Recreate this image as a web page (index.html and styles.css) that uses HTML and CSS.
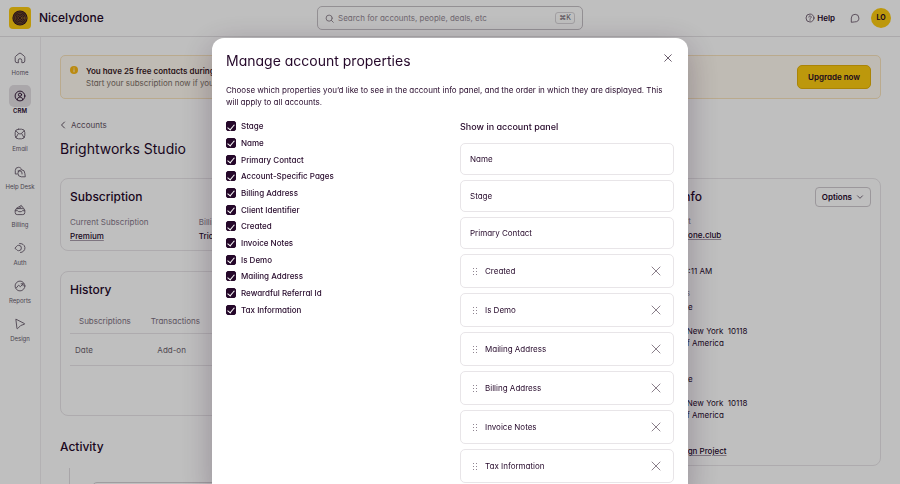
FILE: index.html
```html
<!DOCTYPE html>
<html lang="en">

<head>
    <meta charset="UTF-8" />
    <meta name="viewport" content="width=device-width, initial-scale=1.0" />
    <title>Brightworks Studio - Nicelydone</title>
    <link rel="stylesheet" href="styles.css">
</head>

<body>

    <header class="topbar">
        <a class="brand" href="#">
            <svg class="logo" viewBox="0 0 22 22" aria-hidden="true">
                <rect width="22" height="22" rx="4" fill="#fccb10" />
                <circle cx="11" cy="11" r="7.6" fill="#2d1226" />
                <g fill="none" stroke="#b98a25" stroke-width=".5">
                    <circle cx="11" cy="11" r="6.2" />
                    <circle cx="11" cy="11" r="4.7" />
                    <circle cx="11" cy="11" r="3.2" />
                    <circle cx="11" cy="11" r="1.6" />
                </g>
            </svg>
            <span>Nicelydone</span>
        </a>
        <label class="search">
            <svg viewBox="0 0 10 10" aria-hidden="true">
                <circle cx="4.6" cy="4.6" r="3.4" />
                <path d="M7.1 7.1L9.2 9.2" />
            </svg>
            <input type="search" placeholder="Search for accounts, people, deals, etc" aria-label="Search" />
            <kbd>⌘K</kbd>
        </label>
        <div class="topbar-actions">
            <a class="help" href="#">
                <svg viewBox="0 0 10 10" aria-hidden="true">
                    <circle cx="5" cy="5" r="4" />
                    <path d="M3.8 4.1a1.2 1.2 0 1 1 1.8 1c-.4.3-.6.4-.6.8M5 6.9v.4" />
                </svg>
                Help
            </a>
            <button class="icon-btn" type="button" aria-label="Messages">
                <svg viewBox="0 0 10 10" aria-hidden="true">
                    <path d="M1.3 8.9V5a3.8 3.8 0 1 1 3.8 3.9z" />
                </svg>
            </button>
            <button class="avatar" type="button">LO</button>
        </div>
    </header>

    <div class="layout">
        <nav class="sidebar">
            <a href="#">
                <span class="nav-icon"><svg viewBox="0 0 12 12"><path d="M4.2 10.7H3A1.8 1.8 0 0 1 1.2 9V5.4c0-.6.3-1.1.7-1.4L5 1.5a1.6 1.6 0 0 1 2 0L10.1 4c.4.3.7.8.7 1.4V9A1.8 1.8 0 0 1 9 10.7H7.8V8.5a1.8 1.8 0 0 0-3.6 0z" /></svg></span>
                Home
            </a>
            <a href="#" class="active">
                <span class="nav-icon"><svg viewBox="0 0 12 12"><circle cx="6" cy="6" r="4.9" /><circle cx="6" cy="4.7" r="1.6" /><path d="M3.2 9.8C3.5 8 4.5 7.1 6 7.1s2.5.9 2.8 2.7" /></svg></span>
                CRM
            </a>
            <a href="#">
                <span class="nav-icon"><svg viewBox="0 0 12 12"><rect x="1.2" y="1.2" width="9.6" height="9.6" rx="3.2" /><path d="M2 2.8l2.200 2.400c1 1 2.600 1 3.600 0L10 2.800M2 9.600l2.200-3.800M10 9.600L7.800 5.800" /></svg></span>
                Email
            </a>
            <a href="#">
                <span class="nav-icon"><svg viewBox="0 0 12 12"><path d="M3.2 8H1.3V4.5a3.2 3.2 0 0 1 3.2-3.2c1.4 0 2.6.8 3.1 2" /><path d="M10.9 10.8H7.3a3.5 3.5 0 1 1 3.6-3.5z" /><path d="M4 5h2a2 2 0 0 1 2 2v1" /></svg></span>
                Help Desk
            </a>
            <a href="#">
                <span class="nav-icon"><svg viewBox="0 0 12 12"><rect x="1.2" y="4.6" width="9.6" height="6" rx="2" /><path d="M1.3 6.7h2.2c.5 1.4 4.5 1.4 5 0h2.2M2.5 4.3l4.8-2.9 2.3 3M4.5 4.5l2.7-1.6" /></svg></span>
                Billing
            </a>
            <a href="#">
                <span class="nav-icon"><svg viewBox="0 0 12 12"><path d="M5.5 1.6a4.5 4.5 0 1 1 1 8.9" /><path d="M1.2 6l1.5-1.8c.5-.6 1.2-.9 2-.9a2.7 2.7 0 0 1 0 5.4c-.8 0-1.5-.3-2-.9z" /></svg></span>
                Auth
            </a>
            <a href="#">
                <span class="nav-icon"><svg viewBox="0 0 12 12"><circle cx="6" cy="6" r="4.9" /><path d="M2.4 7.8l2.2-2.6 1.800 1.500 2.700-2.900M7.100 3.800h2v2" /></svg></span>
                Reports
            </a>
            <a href="#">
                <span class="nav-icon"><svg viewBox="0 0 12 12"><path d="M2.2 1.3l8.3 4.3c.3.2.3.5 0 .6L6.7 7.5l-3.2 3.2c-.3.2-.6.1-.6-.3z" /></svg></span>
                Design
            </a>
        </nav>

        <main class="content">
            <section class="banner">
                <svg viewBox="0 0 8 8" aria-hidden="true">
                    <circle cx="4" cy="4" r="4" fill="#fab914" stroke="none" />
                    <path d="M4 2v.2M4 3.7v2.2" stroke="#fff" stroke-width=".8" />
                </svg>
                <p><strong>You have 25 free contacts during your trial</strong>
                    Start your subscription now if you would like to add more.</p>
                <button class="upgrade" type="button">Upgrade now</button>
            </section>

            <a class="back" href="#">
                <svg viewBox="0 0 6 8" aria-hidden="true"><path d="M4.5 1L1.5 4l3 3" /></svg>
                Accounts
            </a>
            <h1>Brightworks Studio</h1>

            <div class="columns">
                <div class="main-col">
                    <section class="card subscription">
                        <h2>Subscription</h2>
                        <dl class="facts">
                            <div><dt>Current Subscription</dt><dd><a href="#">Premium</a></dd></div>
                            <div><dt>Billing Status</dt><dd>Trial</dd></div>
                        </dl>
                    </section>

                    <section class="card history">
                        <h2>History</h2>
                        <div class="tabs">
                            <button type="button">Subscriptions</button>
                            <button type="button">Transactions</button>
                        </div>
                        <table>
                            <thead>
                                <tr>
                                    <th>Date</th>
                                    <th>Add-on</th>
                                    <th>Plan</th>
                                    <th>Rate</th>
                                    <th>Start</th>
                                    <th>End</th>
                                </tr>
                            </thead>
                        </table>
                    </section>

                    <h2 class="activity-title">Activity</h2>
                    <div class="timeline">
                        <div class="timeline-item"></div>
                    </div>
                </div>

                <section class="card info">
                    <div class="info-head">
                        <h2>Account Info</h2>
                        <button class="options" type="button">
                            Options
                            <svg viewBox="0 0 8 8" aria-hidden="true"><path d="M1.5 2.8L4 5.3l2.5-2.5" /></svg>
                        </button>
                    </div>
                    <dl class="details">
                        <dt>Primary Contact</dt>
                        <dd><a href="#">admin@nicelydone.club</a></dd>
                        <dt>Created</dt>
                        <dd>Jan 12, 2024 10:11 AM</dd>
                        <dt>Mailing Address</dt>
                        <dd>Nicelydone Suite<br>350 Fifth Ave<br>New York City, New York&nbsp; 10118<br>United States of America</dd>
                        <dt>Billing</dt>
                        <dd>Nicelydone Suite<br>350 Fifth Ave<br>New York City, New York&nbsp; 10118<br>United States of America</dd>
                        <dt>Notes</dt>
                        <dd><a href="#">Website Redesign Project</a></dd>
                    </dl>
                </section>
            </div>
        </main>
    </div>

    <div class="overlay">
        <div class="modal" role="dialog" aria-modal="true" aria-labelledby="modalTitle">
            <div class="modal-head">
                <h2 id="modalTitle">Manage account properties</h2>
                <button class="close" type="button" aria-label="Close">
                    <svg viewBox="0 0 8 8"><path d="M.7.7l6.6 6.6M7.3.7L.7 7.3" /></svg>
                </button>
            </div>
            <p class="intro">Choose which properties you’d like to see in the account info panel, and the order in which they are displayed. This will apply to all accounts.</p>

            <form class="modal-body">
                <div class="checks">
                    <label><input type="checkbox" checked /> Stage</label>
                    <label><input type="checkbox" checked /> Name</label>
                    <label><input type="checkbox" checked /> Primary Contact</label>
                    <label><input type="checkbox" checked /> Account-Specific Pages</label>
                    <label><input type="checkbox" checked /> Billing Address</label>
                    <label><input type="checkbox" checked /> Client Identifier</label>
                    <label><input type="checkbox" checked /> Created</label>
                    <label><input type="checkbox" checked /> Invoice Notes</label>
                    <label><input type="checkbox" checked /> Is Demo</label>
                    <label><input type="checkbox" checked /> Mailing Address</label>
                    <label><input type="checkbox" checked /> Rewardful Referral Id</label>
                    <label><input type="checkbox" checked /> Tax Information</label>
                </div>

                <div class="panel">
                    <h3>Show in account panel</h3>
                    <ul class="props" id="props">
                        <li>Name</li>
                        <li>Stage</li>
                        <li>Primary Contact</li>
                        <!-- sortable rows are added below -->
                    </ul>
                </div>
            </form>
        </div>
    </div>

    <script>
        const props = document.getElementById('props');
        const sortable = ['Created', 'Is Demo', 'Mailing Address', 'Billing Address', 'Invoice Notes', 'Tax Information'];

        sortable.forEach(function (name) {
            const row = document.createElement('li');
            row.className = 'sortable';
            row.innerHTML = `
      <svg class="grip" viewBox="0 0 5 8"><path d="M0 1.5h1M3 1.5h1M0 4.5h1M3 4.5h1M0 7.5h1M3 7.5h1" /></svg>
      <span>${name}</span>
      <button type="button" class="remove" aria-label="Remove ${name}">
        <svg viewBox="0 0 10 10"><path d="M1 1l8 8M9 1L1 9" /></svg>
      </button>
    `;
            row.querySelector('.remove').addEventListener('click', () => row.remove());
            props.appendChild(row);
        });
    </script>

</body>

</html>
```
FILE: styles.css
```css
* {
    box-sizing: border-box;
}

body {
    margin: 0;
    background: #fff;
    color: #25082a;
    font-family: Inter, "Liberation Sans", sans-serif;
    font-feature-settings: "cv11";
    font-size: 8px;
    line-height: 12px;
    /* page stays still while the dialog is open */
    overflow: hidden;
}

h1,
h2,
h3,
p,
dl,
dd,
ul {
    margin: 0;
    padding: 0;
}

a {
    color: inherit;
    text-decoration: none;
}

button,
input {
    font: inherit;
    font-feature-settings: inherit;
    color: inherit;
}

button {
    padding: 0;
    border: none;
    background: none;
    cursor: pointer;
}

svg {
    display: block;
    flex: none;
    fill: none;
    stroke: currentColor;
    stroke-linecap: round;
    stroke-linejoin: round;
}

h1 {
    font-size: 14px;
    line-height: 20px;
    font-weight: 400;
}

h2 {
    font-size: 12px;
    line-height: 16px;
    font-weight: 400;
}

/* top bar */
.topbar {
    display: grid;
    grid-template-columns: 1fr 266px 1fr;
    align-items: center;
    height: 37px;
    padding: 0 9px;
    border-bottom: 1px solid #e4e2e4;
}

.brand {
    display: flex;
    align-items: center;
    gap: 8px;
    font-size: 12px;
    font-weight: 500;
}

.logo {
    width: 22px;
    height: 22px;
    stroke: none;
}

.search {
    display: flex;
    align-items: center;
    gap: 4px;
    height: 24px;
    padding: 0 7px;
    border: 1px solid #c5c0c5;
    border-radius: 5px;
    color: #8b808b;
}

.search svg {
    width: 9px;
    height: 9px;
}

.search input {
    flex: 1;
    min-width: 0;
    padding: 0;
    border: none;
    outline: none;
    background: none;
}

.search input::placeholder {
    color: #958a96;
}

.search kbd {
    padding: 0 3px;
    border: 1px solid #d8d4d8;
    border-radius: 3px;
    font-family: inherit;
    font-size: 7px;
    line-height: 10px;
    color: #6c5f6c;
}

.topbar-actions {
    display: flex;
    align-items: center;
    justify-content: flex-end;
}

.help {
    display: flex;
    align-items: center;
    gap: 2px;
    font-weight: 600;
}

.help svg,
.icon-btn svg {
    width: 10px;
    height: 10px;
    stroke-width: 0.8;
    color: #5a465c;
}

.icon-btn {
    margin: 0 11px 0 15px;
}

.avatar {
    width: 20px;
    height: 20px;
    border-radius: 50%;
    background: #fccb10;
    font-size: 7px;
    font-weight: 700;
}

/* layout */
.layout {
    display: flex;
}

.sidebar {
    flex: none;
    display: flex;
    flex-direction: column;
    gap: 8px;
    width: 41px;
    min-height: 100vh;
    padding-top: 10px;
    border-right: 1px solid #efedef;
}

.sidebar a {
    display: flex;
    flex-direction: column;
    align-items: center;
    font-size: 6px;
    line-height: 8px;
    white-space: nowrap;
    color: #665a6b;
}

.nav-icon {
    display: grid;
    place-items: center;
    width: 22px;
    height: 22px;
    border-radius: 5px;
}

.nav-icon svg {
    width: 12px;
    height: 12px;
    stroke-width: 0.9;
}

.sidebar .active {
    font-weight: 600;
    color: #25082a;
}

.active .nav-icon {
    background: #e3dfe3;
}

.content {
    flex: 1;
    min-width: 0;
    padding: 18px 19px 0;
}

.banner {
    display: flex;
    align-items: center;
    gap: 8px;
    height: 44px;
    padding: 0 9px;
    border: 1px solid #f8e3bd;
    border-radius: 5px;
    background: #fffaf0;
}

.banner svg {
    align-self: flex-start;
    margin-top: 10px;
    width: 8px;
    height: 8px;
}

.banner p {
    flex: 1;
    color: #7c6f66;
}

.banner strong {
    display: block;
    font-weight: 600;
    color: #38191e;
}

.upgrade {
    height: 24px;
    padding: 0 10px;
    border: 1px solid #e4b108;
    border-radius: 5px;
    background: #fccb10;
    font-weight: 600;
}

.back {
    display: flex;
    align-items: center;
    gap: 5px;
    margin: 20px 0 8px;
    color: #5f5262;
}

.back svg {
    width: 6px;
    height: 8px;
}

.columns {
    display: grid;
    grid-template-columns: 2.04fr 1fr;
    gap: 24px;
    align-items: start;
    margin-top: 19px;
}

.card {
    padding: 10px 9px;
    border: 1px solid #e8e5e8;
    border-radius: 8px;
}

.card h2,
.activity-title {
    font-weight: 500;
}

.facts {
    display: grid;
    grid-template-columns: repeat(4, 1fr);
    margin-top: 11px;
}

dt {
    margin-bottom: 2px;
    color: #85788a;
}

dd {
    font-weight: 500;
}

dd a {
    text-decoration: underline;
    text-decoration-color: #a89cab;
    text-underline-offset: 1px;
}

.subscription {
    padding-bottom: 8px;
    margin-bottom: 20px;
}

.history {
    padding-bottom: 49px;
}

.tabs {
    display: flex;
    gap: 20px;
    margin-top: 17px;
    padding: 0 9px 6px;
    border-bottom: 1px solid #e8e5e8;
    color: #7d7080;
}

table {
    width: 100%;
    border-collapse: collapse;
    table-layout: fixed;
}

th {
    padding: 10px 5px 9px;
    border-bottom: 1px solid #e8e5e8;
    text-align: left;
    font-weight: 400;
    color: #6c5f6e;
}

th:first-child {
    width: 16%;
}

.activity-title {
    margin: 23px 0 13px;
}

.timeline {
    margin-left: 9px;
    padding: 14px 0 0 22px;
    border-left: 1px solid #e0dce0;
}

.timeline-item {
    height: 60px;
    border: 1px solid #d5d0d5;
    border-radius: 5px;
}

.info {
    padding: 8px 9px;
}

.info-head {
    display: flex;
    align-items: center;
    justify-content: space-between;
    margin-bottom: 8px;
}

.options {
    display: flex;
    align-items: center;
    gap: 4px;
    height: 20px;
    padding: 0 6px;
    border: 1px solid #cfcacf;
    border-radius: 4px;
    font-weight: 600;
}

.options svg {
    width: 8px;
    height: 8px;
    color: #75697a;
}

.details dd {
    margin-bottom: 10px;
    font-weight: 400;
}

.details a {
    font-weight: 500;
}

.details dd:last-child {
    margin-bottom: 0;
}

/* dialog */
.overlay {
    position: fixed;
    inset: 0;
    padding-top: 38px;
    background: rgba(0, 0, 0, 0.25);
}

.modal {
    max-width: 476px;
    margin: 0 auto;
    padding: 14px;
    border-radius: 12px;
    background: #fff;
    box-shadow: 0 8px 32px rgba(43, 15, 46, 0.3);
}

.modal-head {
    display: flex;
    align-items: flex-start;
    justify-content: space-between;
}

.modal-head h2 {
    font-size: 14px;
    line-height: 18px;
}

.close {
    padding: 2px;
    color: #6c5f6e;
}

.close svg {
    width: 8px;
    height: 8px;
}

.intro {
    margin: 14px 0 10px;
}

.modal-body {
    display: flex;
    justify-content: space-between;
    align-items: flex-start;
}

.checks {
    display: grid;
    grid-auto-rows: 1fr;
    min-height: 200px;
}

.checks label {
    display: flex;
    align-items: center;
    gap: 5px;
    font-weight: 500;
}

.checks input {
    appearance: none;
    display: grid;
    place-items: center;
    width: 10px;
    height: 10px;
    margin: 0;
    border: 1px solid #25082a;
    border-radius: 2px;
}

.checks input:checked {
    background: #25082a;
}

.checks input:checked::before {
    content: "";
    width: 3px;
    height: 6px;
    border: solid #fff;
    border-width: 0 1px 1px 0;
    transform: rotate(40deg);
}

.panel {
    width: 214px;
}

.panel h3 {
    margin: 3px 0 10px;
    font-size: 9px;
    line-height: 12px;
    font-weight: 500;
}

.props {
    display: grid;
    gap: 5px;
    list-style: none;
}

.props li {
    display: flex;
    align-items: center;
    height: 32px;
    padding: 0 9px;
    border: 1px solid #e8e5e8;
    border-radius: 5px;
}

.props .sortable {
    height: 34px;
    padding: 0 12px;
}

.grip {
    width: 5px;
    height: 8px;
    margin-right: 7px;
    stroke-linecap: butt;
    color: #8f8591;
}

.remove {
    margin-left: auto;
    color: #8b808b;
}

.remove svg {
    width: 10px;
    height: 10px;
}
```
